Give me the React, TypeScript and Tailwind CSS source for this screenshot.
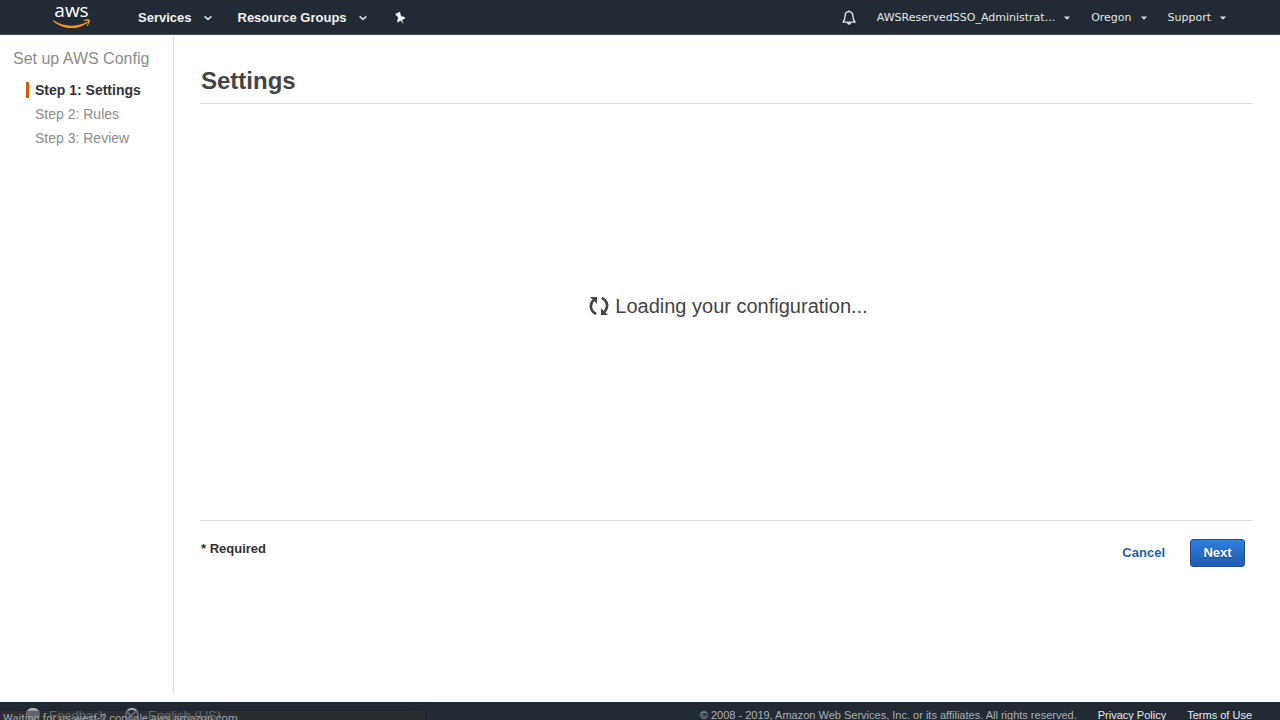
import React from "react";

function CaretChevron() {
  return (
    <svg className="h-2 w-2" viewBox="0 0 8 8" fill="none" aria-hidden="true">
      <path d="M0.6 2.4 L4 5.4 L7.4 2.4" stroke="#d5dbdb" strokeWidth="1.8" />
    </svg>
  );
}

function CaretSolid() {
  return (
    <svg className="h-2 w-2" viewBox="0 0 8 8" aria-hidden="true">
      <path d="M0.8 2.4 H7.2 L4 5.8 Z" fill="#d5dbdb" />
    </svg>
  );
}

function AwsLogo() {
  return (
    <a href="#home" aria-label="AWS home" className="flex h-full w-10 items-center justify-center">
      <svg className="h-7 w-10" viewBox="0 0 40 28">
        <text x="19.5" y="13" textAnchor="middle" fill="#ffffff" fontSize="19" fontWeight="500" fontFamily="'Open Sans', sans-serif">
          aws
        </text>
        <g transform="translate(0 -1)" fill="#f79722">
          <path d="M1.5 17.2 C10 23.6 24 24.6 34.6 18.9 C35.6 18.4 36.2 19.3 35.4 19.9 C25 27.8 9.5 26.4 1.1 18 C0.7 17.4 1 16.9 1.5 17.2 Z" />
          <path d="M31.6 17.4 C34 15.8 37.3 16.1 37.8 16.8 C38.3 17.5 37.3 21.2 35.4 22.9 C35 23.2 34.7 23 34.9 22.6 C35.5 21.3 36.3 19 35.8 18.3 C35.2 17.6 33 17.8 31.8 17.9 C31.4 17.9 31.3 17.6 31.6 17.4 Z" />
        </g>
      </svg>
    </a>
  );
}

function Pin() {
  return (
    <svg className="h-[13px] w-[13px]" viewBox="0 0 12 12" aria-hidden="true">
      <g transform="rotate(-28 6 6)" fill="#f2f3f3">
        <path d="M3.7 0.2 H8.3 V1.8 L7.7 2.3 V4.9 C9.2 5.4 10.1 6.5 10.1 7.9 H1.9 C1.9 6.5 2.8 5.4 4.3 4.9 V2.3 L3.7 1.8 Z" />
        <path d="M5.3 7.6 H6.7 L6 12 Z" />
      </g>
    </svg>
  );
}

function Bell() {
  return (
    <svg className="h-4 w-4" viewBox="0 0 16 16" fill="none" aria-hidden="true">
      <path d="M8 1.7 C5.3 1.7 4.1 3.7 4.1 6 C4.1 9.3 3.3 10.5 1.9 12.2 H14.1 C12.7 10.5 11.9 9.3 11.9 6 C11.9 3.7 10.7 1.7 8 1.7 Z" stroke="#eaeded" strokeWidth="1.3" strokeLinejoin="round" />
      <path d="M6 12.8 H10 C10 15.4 6 15.4 6 12.8 Z" fill="#eaeded" />
      <path d="M8 0.4 V2" stroke="#eaeded" strokeWidth="1.4" />
    </svg>
  );
}

function RefreshArrow() {
  return (
    <>
      <path d="M7.2 18 C1 15 0.4 8.6 4.4 4.2" fill="none" stroke="#444444" strokeWidth="2.7" />
      <path d="M1 1 H8 V7.8 Z" fill="#444444" />
    </>
  );
}

function Refresh() {
  return (
    <svg className="h-5 w-5" viewBox="0 0 20 20" aria-hidden="true">
      <RefreshArrow />
      <g transform="rotate(180 10 10)">
        <RefreshArrow />
      </g>
    </svg>
  );
}

function Header() {
  return (
    <header className="flex h-[35px] shrink-0 items-center justify-between border-b border-[#4b535c] bg-[#222b35] pt-0.5 pr-[53px] pl-[52px] text-[#f2f3f3]">
      <nav className="flex h-full items-center">
        <AwsLogo />
        <button className="ml-[46px] flex items-center gap-3 text-[13px] font-bold">
          Services <CaretChevron />
        </button>
        <button className="ml-[26px] flex items-center gap-3 text-[13px] font-bold">
          Resource Groups <CaretChevron />
        </button>
        <button aria-label="Pin shortcuts" className="ml-[27px]">
          <Pin />
        </button>
      </nav>
      <nav className="flex items-center gap-5 font-['DejaVu_Sans',sans-serif] text-[11px] text-[#e3e6e8]">
        <button aria-label="Notifications">
          <Bell />
        </button>
        <button className="flex items-center gap-2">
          AWSReservedSSO_Administrat... <CaretSolid />
        </button>
        <button className="flex items-center gap-2">
          Oregon <CaretSolid />
        </button>
        <button className="flex items-center gap-2">
          Support <CaretSolid />
        </button>
      </nav>
    </header>
  );
}

function Sidebar() {
  return (
    <aside className="mt-px mb-2 w-[174px] shrink-0 border-r border-[#dddddd] pl-[13px] text-[#8c8c8c]">
      <h2 className="pt-[13px] text-base leading-5">Set up AWS Config</h2>
      <ol className="mt-[9px] pl-[13px] text-sm leading-6">
        <li className="flex items-center gap-[6px] font-bold text-[#333333]" aria-current="step">
          <span className="h-4 w-[3px] bg-[#d45b07]" />
          Step 1: Settings
        </li>
        <li className="pl-[9px]">Step 2: Rules</li>
        <li className="pl-[9px]">Step 3: Review</li>
      </ol>
    </aside>
  );
}

function Footer() {
  return (
    <footer className="flex h-7 shrink-0 items-start justify-between bg-[#222b35] pr-7 pl-[25px] text-[11px] leading-[26px] text-[#a9b0b6]">
      <div className="flex items-center gap-[18px] pt-px text-[13px] text-white">
        <button className="flex items-center gap-2">
          <svg className="h-4 w-4" viewBox="0 0 16 16" fill="#ffffff" aria-hidden="true">
            <path d="M8 0 C12.5 0 15 2.5 15 6 C15 9.5 12.5 12 8 12 L4 15 V11 C2 10 1 8 1 6 C1 2.5 3.5 0 8 0 Z" />
          </svg>
          Feedback
        </button>
        <button className="flex items-center gap-2">
          <svg className="h-4 w-4" viewBox="0 0 16 16" fill="none" stroke="#ffffff" strokeWidth="2" aria-hidden="true">
            <circle cx="8" cy="7" r="6" />
            <path d="M3 4 L7 8 L12 3" />
          </svg>
          English (US)
        </button>
      </div>
      <div className="flex">
        <span>© 2008 - 2019, Amazon Web Services, Inc. or its affiliates. All rights reserved.</span>
        <a href="#privacy" className="ml-[21px] text-[#eaeded]">Privacy Policy</a>
        <a href="#terms" className="ml-[21px] text-[#eaeded]">Terms of Use</a>
      </div>
    </footer>
  );
}

export default function App() {
  return (
    <div className="relative flex h-screen flex-col overflow-hidden bg-white font-['Liberation_Sans',Arial,sans-serif]">
      <Header />
      <div className="flex min-h-[calc(100vh-53px)] shrink-0">
        <Sidebar />
        <main className="flex-1 pr-[27px] pl-[27px] text-[#444444]">
          <h1 className="mt-[30px] border-b border-[#dddddd] pb-[6px] text-2xl leading-8 font-bold">Settings</h1>
          <div role="status" className="flex h-[416px] items-center justify-center gap-[6px] pb-3 pl-[3px] text-xl">
            <Refresh />
            Loading your configuration...
          </div>
          <div className="flex items-start justify-between border-t border-[#dddddd] pt-[18px] pr-2">
            <p className="text-[13px] leading-5 font-bold text-[#333333]">* Required</p>
            <div className="flex items-center gap-[25px] text-[13px] font-bold">
              <button className="text-[#1f5fae]">Cancel</button>
              <button className="h-7 w-[55px] rounded-[3px] border border-[#1c4f94] bg-linear-to-b from-[#2f7fdc] to-[#1f5cb0] text-white text-shadow-[0_1px_1px_#173f78]">
                Next
              </button>
            </div>
          </div>
        </main>
      </div>
      <Footer />
      <div className="absolute bottom-0 left-0 h-[9px] w-[425px] overflow-hidden rounded-tr-sm bg-[#2d3033]/75 pl-[3px] font-['Roboto',sans-serif] text-[11px] leading-4 whitespace-nowrap text-[#a3a5a7] shadow-[0_0_8px_#1e2030]">
        Waiting for us-west-2.console.aws.amazon.com...
      </div>
    </div>
  );
}
